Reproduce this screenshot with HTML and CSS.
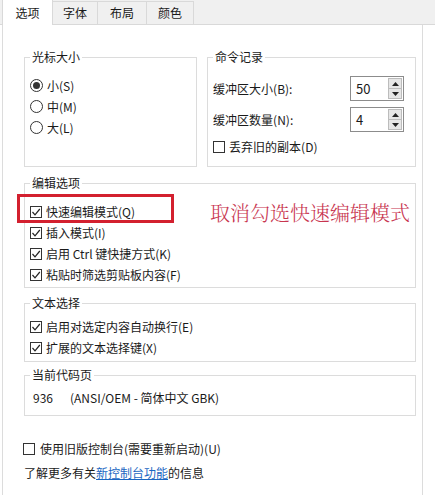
FILE: index.html
```html
<!DOCTYPE html>
<html lang="zh-CN">
<head>
<meta charset="utf-8">
<title>控制台属性</title>
<link rel="stylesheet" href="styles.css">
</head>
<body>
<div class="tabs">
  <div class="tab active">选项</div>
  <div class="tab t2">字体</div>
  <div class="tab t3">布局</div>
  <div class="tab t4">颜色</div>
</div>
<div class="panel">
  <div class="top-row">
    <fieldset class="group cursor">
      <legend>光标大小</legend>
      <div class="opt"><span class="radio on"></span>小(S)</div>
      <div class="opt"><span class="radio"></span>中(M)</div>
      <div class="opt"><span class="radio"></span>大(L)</div>
    </fieldset>
    <fieldset class="group history">
      <legend>命令记录</legend>
      <div class="spin-row">
        <span>缓冲区大小(B):</span>
        <div class="spin"><span class="val">50</span><span class="arrows"><span class="btn"><svg width="7" height="4" viewBox="0 0 7 4"><path d="M0 4 L3.5 0 L7 4Z" fill="#222"/></svg></span><span class="btn"><svg width="7" height="4" viewBox="0 0 7 4"><path d="M0 0 L3.5 4 L7 0Z" fill="#222"/></svg></span></span></div>
      </div>
      <div class="spin-row second">
        <span>缓冲区数量(N):</span>
        <div class="spin"><span class="val">4</span><span class="arrows"><span class="btn"><svg width="7" height="4" viewBox="0 0 7 4"><path d="M0 4 L3.5 0 L7 4Z" fill="#222"/></svg></span><span class="btn"><svg width="7" height="4" viewBox="0 0 7 4"><path d="M0 0 L3.5 4 L7 0Z" fill="#222"/></svg></span></span></div>
      </div>
      <div class="opt discard"><span class="cb"></span>丢弃旧的副本(D)</div>
    </fieldset>
  </div>

  <fieldset class="group edit">
    <legend>编辑选项</legend>
    <div class="opt"><span class="cb"><svg width="10" height="10" viewBox="0 0 10 10"><path d="M1.5 5 L4 7.8 L8.8 2" fill="none" stroke="#222" stroke-width="1.2"/></svg></span>快速编辑模式(Q)</div>
    <div class="opt"><span class="cb"><svg width="10" height="10" viewBox="0 0 10 10"><path d="M1.5 5 L4 7.8 L8.8 2" fill="none" stroke="#222" stroke-width="1.2"/></svg></span>插入模式(I)</div>
    <div class="opt"><span class="cb"><svg width="10" height="10" viewBox="0 0 10 10"><path d="M1.5 5 L4 7.8 L8.8 2" fill="none" stroke="#222" stroke-width="1.2"/></svg></span>启用 Ctrl 键快捷方式(K)</div>
    <div class="opt"><span class="cb"><svg width="10" height="10" viewBox="0 0 10 10"><path d="M1.5 5 L4 7.8 L8.8 2" fill="none" stroke="#222" stroke-width="1.2"/></svg></span>粘贴时筛选剪贴板内容(F)</div>
    <div class="mark"></div>
    <div class="note">取消勾选快速编辑模式</div>
  </fieldset>

  <fieldset class="group select">
    <legend>文本选择</legend>
    <div class="opt"><span class="cb"><svg width="10" height="10" viewBox="0 0 10 10"><path d="M1.5 5 L4 7.8 L8.8 2" fill="none" stroke="#222" stroke-width="1.2"/></svg></span>启用对选定内容自动换行(E)</div>
    <div class="opt"><span class="cb"><svg width="10" height="10" viewBox="0 0 10 10"><path d="M1.5 5 L4 7.8 L8.8 2" fill="none" stroke="#222" stroke-width="1.2"/></svg></span>扩展的文本选择键(X)</div>
  </fieldset>

  <fieldset class="group codepage">
    <legend>当前代码页</legend>
    <div class="cp"><span class="num">936</span>(ANSI/OEM - 简体中文 GBK)</div>
  </fieldset>

  <div class="opt legacy"><span class="cb"></span>使用旧版控制台(需要重新启动)(U)</div>
  <div class="info">了解更多有关<a class="link" href="#">新控制台功能</a>的信息</div>
</div>
</body>
</html>
```

FILE: styles.css
```css
* { box-sizing: border-box; }

body {
  margin: 0;
  background: #ffffff;
  font-family: "Noto Sans CJK SC", "Noto Sans", sans-serif;
  font-size: 12px;
  color: #1a1a1a;
  width: 435px;
  height: 495px;
  overflow: hidden;
}

.tabs {
  display: flex;
  align-items: flex-end;
  height: 25px;
  padding-left: 2px;
  background: #f0f0f0;
  border-bottom: 1px solid #d9d9d9;
}

.tab {
  height: 23px;
  line-height: 21px;
  text-align: center;
  background: #f0f0f0;
  border: 1px solid #d9d9d9;
  border-left: none;
  border-bottom: none;
}

.tab.active {
  width: 51px;
  line-height: 25px;
  background: #ffffff;
  border-left: 1px solid #d9d9d9;
  margin-bottom: -1px;
  height: 26px;
  padding-bottom: 1px;
}

.t2 { width: 45px; }
.t3 { width: 49px; }
.t4 { width: 47px; }

.panel {
  margin-left: 2px;
  width: 421px;
  height: 470px;
  border-left: 1px solid #dcdcdc;
  border-right: 1px solid #dcdcdc;
  background: #ffffff;
  padding: 24px 6px 0 21px;
}

.top-row {
  display: flex;
  gap: 10px;
}

.group {
  margin: 0;
  min-width: 0;
  padding: 0 5px;
  border: 1px solid #dcdcdc;
}

.group legend {
  padding: 0 2px;
  line-height: 16px;
  font-size: 12px;
}

.cursor {
  width: 174px;
  padding-top: 10px;
}

.history {
  width: 210px;
  padding-top: 11px;
  padding-bottom: 9px;
}

.opt {
  display: flex;
  align-items: center;
  height: 21px;
  gap: 4px;
  white-space: nowrap;
}

.radio {
  width: 13px;
  height: 13px;
  border: 1px solid #333;
  border-radius: 50%;
  display: flex;
  align-items: center;
  justify-content: center;
  flex: none;
}

.radio.on::after {
  content: "";
  width: 7px;
  height: 7px;
  border-radius: 50%;
  background: #333;
}

.cb {
  width: 12px;
  height: 12px;
  border: 1px solid #333;
  display: flex;
  align-items: center;
  justify-content: center;
  flex: none;
  background: #fff;
}

.spin-row {
  display: flex;
  align-items: center;
  justify-content: space-between;
  height: 25px;
}

.spin-row.second {
  margin-top: 6px;
}

.discard {
  margin-top: 4px;
}

.spin {
  width: 54px;
  height: 25px;
  margin-right: 6px;
  border: 1px solid #8c8c8c;
  display: flex;
  align-items: stretch;
  background: #fff;
}

.val {
  flex: 1;
  padding-left: 5px;
  line-height: 23px;
  font-size: 13px;
}

.arrows {
  width: 14px;
  margin: 1px 1px 1px 0;
  display: flex;
  flex-direction: column;
}

.btn {
  flex: 1;
  background: #e6e6e6;
  border: 1px solid #bcbcbc;
  display: flex;
  align-items: center;
  justify-content: center;
}

.btn + .btn {
  border-top: none;
}

.edit {
  position: relative;
  margin-top: 8px;
  padding-top: 10px;
  padding-bottom: 2px;
}

.mark {
  position: absolute;
  left: -8px;
  top: 3px;
  width: 157px;
  height: 29px;
  border: 3px solid #d3202f;
}

.note {
  position: absolute;
  left: 185px;
  top: 8px;
  font-family: "Noto Serif CJK SC", "AR PL UMing CN", serif;
  font-size: 20px;
  font-weight: 300;
  line-height: 28px;
  color: #c8354f;
}

.select {
  margin-top: 7px;
  padding-top: 5px;
  padding-bottom: 3px;
}

.codepage {
  margin-top: 5px;
  padding-top: 4px;
  padding-bottom: 7px;
}

.cp {
  height: 21px;
  line-height: 21px;
  padding-left: 3px;
}

.num {
  margin-right: 17px;
}

.legacy {
  margin-top: 22px;
  margin-left: -1px;
  gap: 5px;
}

.info {
  margin-top: 3px;
  height: 21px;
  line-height: 21px;
}

.link {
  color: #1a66c2;
  text-decoration: underline;
}
```
